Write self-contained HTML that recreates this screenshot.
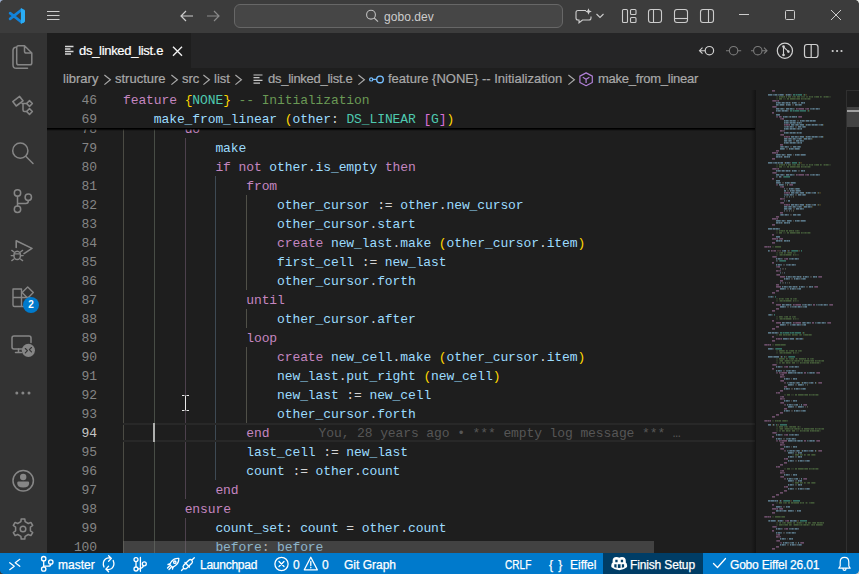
<!DOCTYPE html>
<html lang="en">
<head>
<meta charset="utf-8">
<title>ds_linked_list.e - gobo.dev - Visual Studio Code</title>
<style>
*{box-sizing:border-box;margin:0;padding:0}
html,body{width:859px;height:574px;overflow:hidden;background:#1e1e1e}
body{position:relative;font-family:"Liberation Sans",sans-serif;font-size:13px;color:#cccccc}
svg{position:absolute;left:0;top:0;overflow:visible}
.t{position:absolute;white-space:pre;line-height:16px}
#titlebar{position:absolute;left:0;top:0;width:859px;height:33px;background:#3c3c3c}
#search{position:absolute;left:234px;top:4px;width:329px;height:24px;border:1px solid #676767;border-radius:6px;background:#464646}
#activity{position:absolute;left:0;top:33px;width:47px;height:520px;background:#333333}
#badge{position:absolute;left:23px;top:264px;width:16px;height:16px;border-radius:8px;background:#007acc;color:#fff;font-size:10px;font-weight:bold;text-align:center;line-height:16px}
#tabs{position:absolute;left:47px;top:33px;width:812px;height:35px;background:#252526}
#tab{position:absolute;left:0;top:0;width:144px;height:35px;background:#1e1e1e}
#crumbs{position:absolute;left:47px;top:68px;width:812px;height:22px;background:#1e1e1e;color:#a9a9a9;font-size:13px}
#crumbs .t{top:3px;-webkit-text-stroke:0.2px #a9a9a9}
#editor{position:absolute;left:47px;top:90px;width:812px;height:463px;background:#1e1e1e;overflow:hidden}
.ln,.cl{position:absolute;height:19px;line-height:21px;font-family:"Liberation Mono",monospace;font-size:13px;letter-spacing:-0.1px;white-space:pre}
.ln{left:0;width:50px;text-align:right;color:#858585}
.ln.cur{color:#c6c6c6}
.cl{left:76px;color:#d4d4d4}
.k{color:#c586c0}.v{color:#9cdcfe}.y{color:#ffd700}.p{color:#da70d6}.c{color:#6a9955}.g{color:#565656;margin-left:3px}.ty{color:#4ec9b0}
.gd{position:absolute;width:1px}
#curline{position:absolute;left:76px;top:333px;width:632px;height:19px;border-top:2px solid #282828;border-bottom:2px solid #282828}
#cursor{position:absolute;left:106px;top:333px;width:2px;height:19px;background:#aeafad}
#sticky{position:absolute;left:0;top:0;width:708px;height:38px;background:#1e1e1e;box-shadow:0 1px 0 #000,0 2px 0 rgba(0,0,0,.55),0 3px 0 rgba(0,0,0,.2)}
#hscroll{position:absolute;left:76px;top:451px;width:531px;height:12px;background:rgba(121,121,121,.4)}
#vtrack{position:absolute;left:799px;top:0;width:13px;height:463px;border-left:1px solid #303030;border-top:1px solid #303030}
#vthumb{position:absolute;left:800px;top:17px;width:12px;height:20px;background:#424242}
#vmark{position:absolute;left:800px;top:20px;width:12px;height:2px;background:#a0a0a0}
#minimap{position:absolute;left:708px;top:0;width:91px;height:463px}
#mshadow{position:absolute;left:704px;top:0;width:5px;height:463px;background:linear-gradient(to right,rgba(0,0,0,0),rgba(0,0,0,.36))}
#status{position:absolute;left:0;top:553px;width:859px;height:21px;background:#007acc;color:#ffffff;font-size:12px}
#status .t{top:4px;-webkit-text-stroke:0.25px #fff}
#prom{position:absolute;left:603px;top:0;width:100px;height:21px;background:#003d66}
</style>
</head>
<body>
<div id="titlebar">
<div id="search"></div>
<svg width="859" height="33" viewBox="0 0 859 33" fill="none" stroke="#cccccc" stroke-width="1.1">
<!-- corner artefacts -->
<path d="M0 0H3Q0.5 0.5 0 3Z" fill="#9fb0d0" stroke="none"/>
<path d="M859 0H856Q858.5 0.5 859 3.5Z" fill="#e6e9e4" stroke="none"/>
<!-- vscode logo -->
<g stroke="none">
<path d="M10.1 13.1L21.3 22M10.1 18.9L21.3 10" stroke="#1283da" stroke-width="2.7" stroke-linecap="round"/>
<path d="M20.9 8.1L24.3 9.8Q25 10.2 25 11V21Q25 21.8 24.3 22.2L20.9 23.9Z" fill="#2aacf4"/>
</g>
<!-- hamburger -->
<path d="M47 11.5H59.5M47 15.5H59.5M47 19.5H59.5" stroke-width="1"/>
<!-- nav arrows -->
<path d="M193 16H181M186 11L181 16L186 21" stroke-width="1.2"/>
<path d="M207 16H219M214 11L219 16L214 21" stroke="#8a8a8a" stroke-width="1.2"/>
<!-- search icon -->
<circle cx="371" cy="14.7" r="4.4" stroke="#c0c0c0"/>
<path d="M374.2 18L378 21.6" stroke="#c0c0c0"/>
<!-- copilot chat icon -->
<path d="M586 10.5H578Q576 10.5 576 12.5V18Q576 20 578 20H579V22.8L582.5 20H589Q591 20 591 18V16.5"/>
<path d="M588.5 8.2L589.4 10.6L591.8 11.5L589.4 12.4L588.5 14.8L587.6 12.4L585.2 11.5L587.6 10.6Z" fill="#cccccc" stroke="none"/>
<path d="M596.5 14L600 17.5L603.5 14"/>
<!-- layout icons -->
<rect x="622.5" y="9.5" width="5" height="13" rx="1"/>
<rect x="630.5" y="9.5" width="5.5" height="5" rx="1"/>
<rect x="630.5" y="17.5" width="5.5" height="5" rx="1"/>
<rect x="648.5" y="9.5" width="13" height="13" rx="2.5"/>
<path d="M653.5 9.5V22.5"/>
<rect x="674.5" y="9.5" width="13" height="13" rx="2.5"/>
<path d="M674.5 18.5H687.5"/>
<rect x="700.5" y="9.5" width="13" height="13" rx="2.5"/>
<path d="M708.5 9.5V22.5"/>
<!-- window controls -->
<path d="M739 14.5H749" stroke-width="1"/>
<rect x="785.5" y="10.5" width="9" height="9" rx="1" stroke-width="1"/>
<path d="M831 10L841 20M841 10L831 20" stroke-width="1"/>
</svg>

<span class="t" style="left:384px;top:9px;font-size:12px;color:#cccccc;letter-spacing:0.05px">gobo.dev</span>
</div>
<div id="activity">
<svg width="47" height="520" viewBox="0 0 47 520" fill="none" stroke="#868686" stroke-width="1.5" stroke-linejoin="round" stroke-linecap="round">
<!-- explorer -->
<path d="M24.5 12.7H18.5Q16.7 12.7 16.7 14.5V30Q16.7 31.8 18.5 31.8H30Q31.8 31.8 31.8 30V20Z M24.5 12.7V18.2Q24.5 20 26.3 20H31.8"/>
<path d="M15.5 14.2Q13 14.5 13 17.5V32Q13 35.3 16.3 35.3H27.5"/>
<!-- second icon -->
<path d="M12.8 68.6L19.6 63.4L23 67.8L16.2 73Z" stroke-width="1.6"/>
<path d="M29.5 67.6L32.4 70.5L29.5 73.4L26.6 70.5Z"/>
<path d="M29.5 75.6L32.4 78.5L29.5 81.4L26.6 78.5Z"/>
<path d="M22 70.5H26.6M23 70.8V77Q23 78.5 24.5 78.5H26.6"/>
<!-- search -->
<circle cx="20.3" cy="117.7" r="7.6"/>
<path d="M26 123.5L33 130.5"/>
<!-- source control -->
<circle cx="17.5" cy="160" r="3.2"/>
<circle cx="28.3" cy="164.3" r="3.2"/>
<circle cx="17.5" cy="176.3" r="3.2"/>
<path d="M17.5 163.2V173.1M28.3 167.5V168Q28.3 170.5 25.8 170.5H17.5"/>
<!-- run and debug -->
<path d="M16.2 214.5V207.8L32 215.4L24 220.6" stroke-width="1.6"/>
<ellipse cx="17.2" cy="222.4" rx="3.3" ry="4.2" stroke-width="1.5"/>
<path d="M14 219L11.8 217.4M14 222.6H11.2M14 226L11.8 227.6M20.4 219L22.6 217.4M20.4 222.6H23.2M20.4 226L22.6 227.6M14.5 220.8H19.9" stroke-width="1.3"/>
<!-- extensions -->
<path d="M13 256H21.5V273.5H14.5Q13 273.5 13 272Z M13 264.5H30V272Q30 273.5 28.5 273.5H21.5" stroke-width="1.4"/>
<path d="M27.7 254L33.3 259.6L27.7 265.2L22.1 259.6Z" stroke-width="1.4"/>
<!-- remote explorer -->
<path d="M22 316H14Q12 316 12 314V305Q12 303 14 303H29Q31 303 31 305V309.5"/>
<path d="M15.5 319.5H21.5M18.5 316V319.5"/>
<circle cx="28.4" cy="317.3" r="6.6" fill="#868686" stroke="none"/>
<path d="M25.3 315.5L27.5 317.7L25.3 319.9M31.5 314.5L29.3 316.7L31.5 318.9" stroke="#333333" stroke-width="1.1"/>
<!-- more -->
<circle cx="16.8" cy="360" r="1.5" fill="#868686" stroke="none"/>
<circle cx="22.9" cy="360" r="1.5" fill="#868686" stroke="none"/>
<circle cx="29" cy="360" r="1.5" fill="#868686" stroke="none"/>
<!-- account -->
<circle cx="23.2" cy="447.8" r="10.2"/>
<circle cx="23.2" cy="444" r="3.2" fill="#868686" stroke="none"/>
<path d="M18.6 448.6H27.8Q29.2 448.6 29.2 450Q29.2 454.6 23.2 454.6Q17.2 454.6 17.2 450Q17.2 448.6 18.6 448.6Z" fill="#868686" stroke="none"/>
<!-- gear -->
<path d="M20.9 488.7L21.2 485.9L24.8 485.9L25.1 488.7L28.3 490.5L30.9 489.4L32.7 492.5L30.4 494.2L30.4 497.8L32.7 499.5L30.9 502.6L28.3 501.5L25.1 503.3L24.8 506.1L21.2 506.1L20.9 503.3L17.7 501.5L15.1 502.6L13.3 499.5L15.6 497.8L15.6 494.2L13.3 492.5L15.1 489.4L17.7 490.5Z" stroke-width="1.5"/>
<circle cx="23" cy="496" r="2.8"/>
</svg>
<div id="badge">2</div>
</div>
<div id="tabs">
<div id="tab"></div>
<svg width="812" height="35" viewBox="47 33 812 35" fill="none" stroke="#d0d0d0" stroke-width="1.1">
<!-- file icon -->
<path d="M65 46.5H73.5M65 49H70.5M65 51.5H73.5M65 54H71" stroke="#d8d8d8" stroke-width="1.4"/>
<!-- close -->
<path d="M173 46.8L182 55.8M182 46.8L173 55.8" stroke="#f0f0f0" stroke-width="1.4"/>
<!-- editor actions -->
<circle cx="709.4" cy="50.7" r="4.2" stroke-width="1.2"/>
<path d="M705 50.7H699.5M702.5 47.7L699.5 50.7L702.5 53.7" stroke-width="1.1"/>
<circle cx="733.6" cy="50.7" r="4.2" stroke="#7c7c7c"/>
<path d="M726 50.7H729.4M737.8 50.7H741.2" stroke="#7c7c7c"/>
<circle cx="757.8" cy="50.7" r="4.2" stroke="#7c7c7c"/>
<path d="M762 50.7H767M764 47.7L767 50.7L764 53.7M751 50.7H753.6" stroke="#7c7c7c"/>
<circle cx="784.9" cy="50.7" r="7.6" stroke-width="1.2"/>
<path d="M783.5 46.8V54.8M783.8 47.2L788.2 51.4" stroke-width="1.1"/>
<circle cx="783.5" cy="46.5" r="1.3" fill="#d0d0d0" stroke="none"/>
<circle cx="783.5" cy="55" r="1.3" fill="#d0d0d0" stroke="none"/>
<circle cx="788.4" cy="51.6" r="1.3" fill="#d0d0d0" stroke="none"/>
<rect x="804.5" y="44.5" width="13.5" height="13" rx="2.5" stroke-width="1.2"/>
<path d="M811.2 44.5V57.5" stroke-width="1.2"/>
<circle cx="832.7" cy="51" r="1.1" fill="#d0d0d0" stroke="none"/>
<circle cx="837.1" cy="51" r="1.1" fill="#d0d0d0" stroke="none"/>
<circle cx="841.5" cy="51" r="1.1" fill="#d0d0d0" stroke="none"/>
</svg>

<span class="t" style="left:32px;top:10px;color:#ffffff;letter-spacing:-0.3px;-webkit-text-stroke:0.2px #fff">ds_linked_list.e</span>
</div>
<div id="crumbs">
<svg width="812" height="22" viewBox="47 68 812 22" fill="none" stroke="#a9a9a9" stroke-width="1.1">
<path d="M104.4 75L110.4 79.8L104.4 84.6" stroke-width="1.2"/>
<path d="M171.4 75L177.4 79.8L171.4 84.6" stroke-width="1.2"/>
<path d="M203.4 75L209.4 79.8L203.4 84.6" stroke-width="1.2"/>
<path d="M235.4 75L241.4 79.8L235.4 84.6" stroke-width="1.2"/>
<path d="M358.4 75L364.4 79.8L358.4 84.6" stroke-width="1.2"/>
<path d="M568.4 75L574.4 79.8L568.4 84.6" stroke-width="1.2"/>
<!-- file icon -->
<path d="M253.5 75H262.5M253.5 77.7H259.5M253.5 80.4H262.5M253.5 83.1H260" stroke="#c5c5c5" stroke-width="1.2"/>
<!-- symbol: feature clause (blue) -->
<circle cx="380" cy="79.4" r="3.3" stroke="#75beff" stroke-width="1.4"/>
<circle cx="371.2" cy="79.4" r="1.6" stroke="#75beff" stroke-width="1.2"/>
<path d="M373 79.4H376.5" stroke="#75beff" stroke-width="1.3"/>
<!-- symbol: method (purple cube) -->
<path d="M586.1 72.9L592.3 76.1V82.5L586.1 85.7L579.9 82.5V76.1Z" stroke="#b180d7" stroke-width="1.2" stroke-linejoin="round"/>
<path d="M582.8 77.3L586.1 79.2L589.4 77.3M586.1 79.2V83" stroke="#b180d7" stroke-width="1.2"/>
</svg>

<span class="t" style="left:16px">library</span>
<span class="t" style="left:68px">structure</span>
<span class="t" style="left:135px">src</span>
<span class="t" style="left:167px">list</span>
<span class="t" style="left:221px;letter-spacing:-0.27px">ds_linked_list.e</span>
<span class="t" style="left:341px">feature {NONE} -- Initialization</span>
<span class="t" style="left:551px;letter-spacing:-0.25px">make_from_linear</span>
</div>
<div id="editor">
<div id="code">
<div class="gd" style="left:76px;top:29px;height:456px;background:#4b4b44"></div>
<div class="gd" style="left:107px;top:29px;height:456px;background:#484d46"></div>
<div class="gd" style="left:138px;top:48px;height:361px;background:#4d414d"></div>
<div class="gd" style="left:138px;top:428px;height:57px;background:#4d414d"></div>
<div class="gd" style="left:168px;top:86px;height:304px;background:#3e4a54"></div>
<div class="gd" style="left:199px;top:105px;height:95px;background:#505048"></div>
<div class="gd" style="left:199px;top:219px;height:19px;background:#505048"></div>
<div class="gd" style="left:199px;top:257px;height:76px;background:#505048"></div>
<div id="curline"></div>
<div class="ln" style="top:29px">78</div>
<div class="cl" style="top:29px">        <span class="k">do</span></div>
<div class="ln" style="top:48px">79</div>
<div class="cl" style="top:48px">            <span class="v">make</span></div>
<div class="ln" style="top:67px">80</div>
<div class="cl" style="top:67px">            <span class="k">if</span> <span class="k">not</span> <span class="v">other</span>.<span class="v">is_empty</span> <span class="k">then</span></div>
<div class="ln" style="top:86px">81</div>
<div class="cl" style="top:86px">                <span class="k">from</span></div>
<div class="ln" style="top:105px">82</div>
<div class="cl" style="top:105px">                    <span class="v">other_cursor</span> := <span class="v">other</span>.<span class="v">new_cursor</span></div>
<div class="ln" style="top:124px">83</div>
<div class="cl" style="top:124px">                    <span class="v">other_cursor</span>.<span class="v">start</span></div>
<div class="ln" style="top:143px">84</div>
<div class="cl" style="top:143px">                    <span class="k">create</span> <span class="v">new_last</span>.<span class="v">make</span> <span class="y">(</span><span class="v">other_cursor</span>.<span class="v">item</span><span class="y">)</span></div>
<div class="ln" style="top:162px">85</div>
<div class="cl" style="top:162px">                    <span class="v">first_cell</span> := <span class="v">new_last</span></div>
<div class="ln" style="top:181px">86</div>
<div class="cl" style="top:181px">                    <span class="v">other_cursor</span>.<span class="v">forth</span></div>
<div class="ln" style="top:200px">87</div>
<div class="cl" style="top:200px">                <span class="k">until</span></div>
<div class="ln" style="top:219px">88</div>
<div class="cl" style="top:219px">                    <span class="v">other_cursor</span>.<span class="v">after</span></div>
<div class="ln" style="top:238px">89</div>
<div class="cl" style="top:238px">                <span class="k">loop</span></div>
<div class="ln" style="top:257px">90</div>
<div class="cl" style="top:257px">                    <span class="k">create</span> <span class="v">new_cell</span>.<span class="v">make</span> <span class="y">(</span><span class="v">other_cursor</span>.<span class="v">item</span><span class="y">)</span></div>
<div class="ln" style="top:276px">91</div>
<div class="cl" style="top:276px">                    <span class="v">new_last</span>.<span class="v">put_right</span> <span class="y">(</span><span class="v">new_cell</span><span class="y">)</span></div>
<div class="ln" style="top:295px">92</div>
<div class="cl" style="top:295px">                    <span class="v">new_last</span> := <span class="v">new_cell</span></div>
<div class="ln" style="top:314px">93</div>
<div class="cl" style="top:314px">                    <span class="v">other_cursor</span>.<span class="v">forth</span></div>
<div class="ln cur" style="top:333px">94</div>
<div class="cl" style="top:333px">                <span class="k">end</span><span class="g">      You, 28 years ago • *** empty log message *** …</span></div>
<div class="ln" style="top:352px">95</div>
<div class="cl" style="top:352px">                <span class="v">last_cell</span> := <span class="v">new_last</span></div>
<div class="ln" style="top:371px">96</div>
<div class="cl" style="top:371px">                <span class="v">count</span> := <span class="v">other</span>.<span class="v">count</span></div>
<div class="ln" style="top:390px">97</div>
<div class="cl" style="top:390px">            <span class="k">end</span></div>
<div class="ln" style="top:409px">98</div>
<div class="cl" style="top:409px">        <span class="k">ensure</span></div>
<div class="ln" style="top:428px">99</div>
<div class="cl" style="top:428px">            <span class="v">count_set</span>: <span class="v">count</span> = <span class="v">other</span>.<span class="v">count</span></div>
<div class="ln" style="top:447px">100</div>
<div class="cl" style="top:447px">            <span class="v">before</span>: <span class="v">before</span></div>

<div id="cursor"></div>
</div>
<div id="sticky">
<div class="ln" style="top:0">46</div>
<div class="cl" style="top:0"><span class="k">feature</span> <span class="y">{</span><span class="ty">NONE</span><span class="y">}</span> <span class="c">-- Initialization</span></div>
<div class="ln" style="top:19px">69</div>
<div class="cl" style="top:19px">    <span class="v">make_from_linear</span> <span class="y">(</span><span class="v">other</span>: <span class="ty">DS_LINEAR</span> <span class="p">[</span><span class="ty">G</span><span class="p">]</span><span class="y">)</span></div>
</div>
<div id="minimap"><svg width="91" height="463" viewBox="0 0 91 463" fill="none" stroke-width="1.2">
<path d="M21 6.8h2M68 6.8h1M74 6.8h2M21 8.8h2M28 8.8h3M55 8.8h1M21 74.8h2M68 74.8h1M74 74.8h2M21 76.8h2M28 76.8h3M55 76.8h1M21 140.8h2M44 140.8h1M21 142.8h2M28 142.8h3M55 142.8h1M17 156.8h2M21 162.8h2M38 162.8h1M40 162.8h1M21 164.8h2M24 164.8h1M36 164.8h1M39 164.8h1M41 164.8h3M21 208.8h2M21 210.8h2M24 210.8h1M36 210.8h1M39 210.8h1M41 210.8h3M21 226.8h2M21 228.8h2M24 228.8h1M36 228.8h1M39 228.8h1M41 228.8h3M21 244.8h2M17 254.8h2M21 260.8h2M21 262.8h2M24 262.8h1M36 262.8h1M39 262.8h1M41 262.8h3M21 268.8h2M40 268.8h1M42 268.8h1M21 270.8h2M24 270.8h1M29 270.8h1M38 270.8h1M45 270.8h2M21 272.8h2M35 272.8h1M41 272.8h3M64 272.8h2M29 304.8h2M36 304.8h3M63 304.8h1M17 330.8h2M21 336.8h2M42 336.8h1M44 336.8h2M21 338.8h2M24 338.8h1M29 338.8h1M38 338.8h1M45 338.8h2M21 340.8h2M35 340.8h1M41 340.8h3M64 340.8h2M37 364.8h2M60 364.8h1M29 378.8h2M36 378.8h3M63 378.8h1M37 392.8h2M60 392.8h1M21 412.8h2M50 412.8h1M52 412.8h1M59 412.8h1M17 426.8h2M21 432.8h2M41 432.8h1M47 432.8h2M21 434.8h2M38 434.8h1M47 434.8h1M54 434.8h1" stroke="#6a9955" opacity="0.25"/>
<path d="M25 6.8h1M28 6.8h1M37 6.8h2M40 6.8h1M46 6.8h4M51 6.8h2M55 6.8h2M59 6.8h2M66 6.8h1M70 6.8h1M73 6.8h1M40 8.8h2M47 8.8h3M51 8.8h2M25 74.8h1M28 74.8h1M37 74.8h2M40 74.8h1M46 74.8h4M51 74.8h2M55 74.8h2M59 74.8h2M66 74.8h1M70 74.8h1M73 74.8h1M40 76.8h2M47 76.8h3M51 76.8h2M25 140.8h1M28 140.8h1M37 140.8h1M40 140.8h2M43 140.8h1M40 142.8h2M47 142.8h3M51 142.8h2M24 162.8h2M30 162.8h1M32 162.8h1M39 162.8h1M27 164.8h2M30 164.8h1M40 164.8h1M25 208.8h2M28 208.8h1M30 208.8h2M35 208.8h1M38 208.8h2M41 208.8h1M27 210.8h2M30 210.8h1M40 210.8h1M27 226.8h1M29 226.8h2M34 226.8h1M37 226.8h2M40 226.8h1M27 228.8h2M30 228.8h1M40 228.8h1M30 244.8h1M32 244.8h1M35 244.8h1M39 244.8h1M42 244.8h1M44 244.8h1M46 244.8h1M48 244.8h2M53 244.8h1M56 244.8h1M25 254.8h1M30 254.8h1M29 260.8h1M32 260.8h1M34 260.8h2M40 260.8h1M43 260.8h2M46 260.8h1M27 262.8h2M30 262.8h1M40 262.8h1M29 268.8h1M32 268.8h1M34 268.8h2M49 268.8h1M52 268.8h1M55 268.8h2M58 268.8h1M34 270.8h3M39 270.8h1M42 270.8h1M44 270.8h1M54 270.8h2M61 270.8h3M65 270.8h2M24 272.8h2M29 272.8h1M33 272.8h1M46 272.8h3M50 272.8h2M56 272.8h1M59 272.8h1M61 272.8h1M48 304.8h2M55 304.8h3M59 304.8h2M21 330.8h1M23 330.8h1M27 330.8h1M31 330.8h2M29 336.8h2M32 336.8h1M34 336.8h1M37 336.8h1M34 338.8h3M39 338.8h1M42 338.8h1M44 338.8h1M54 338.8h2M61 338.8h3M65 338.8h2M24 340.8h2M29 340.8h1M33 340.8h1M46 340.8h3M50 340.8h2M56 340.8h1M59 340.8h1M61 340.8h1M47 364.8h1M50 364.8h1M52 364.8h1M56 364.8h1M48 378.8h2M55 378.8h3M59 378.8h2M47 392.8h1M50 392.8h1M52 392.8h1M56 392.8h1M28 412.8h2M31 412.8h1M38 412.8h1M46 412.8h2M54 412.8h2M25 426.8h2M24 432.8h1M27 432.8h2M30 432.8h1M36 432.8h1M38 432.8h1M43 432.8h1M46 432.8h1M55 432.8h1M57 432.8h1M64 432.8h1M67 432.8h1M27 434.8h3M36 434.8h1M43 434.8h3M48 434.8h1M51 434.8h1M53 434.8h1M56 434.8h1M58 434.8h1M67 434.8h1" stroke="#6a9955" opacity="0.42"/>
<path d="M24 6.8h1M26 6.8h2M29 6.8h1M31 6.8h1M33 6.8h3M39 6.8h1M42 6.8h3M54 6.8h1M57 6.8h1M61 6.8h3M65 6.8h1M69 6.8h1M71 6.8h2M24 8.8h3M32 8.8h2M35 8.8h5M42 8.8h3M46 8.8h1M50 8.8h1M53 8.8h2M24 74.8h1M26 74.8h2M29 74.8h1M31 74.8h1M33 74.8h3M39 74.8h1M42 74.8h3M54 74.8h1M57 74.8h1M61 74.8h3M65 74.8h1M69 74.8h1M71 74.8h2M24 76.8h3M32 76.8h2M35 76.8h5M42 76.8h3M46 76.8h1M50 76.8h1M53 76.8h2M24 140.8h1M26 140.8h2M29 140.8h1M31 140.8h2M34 140.8h3M38 140.8h1M42 140.8h1M24 142.8h3M32 142.8h2M35 142.8h5M42 142.8h3M46 142.8h1M50 142.8h1M53 142.8h2M20 156.8h6M26 162.8h2M29 162.8h1M33 162.8h4M25 164.8h2M29 164.8h1M31 164.8h5M38 164.8h1M24 208.8h1M27 208.8h1M32 208.8h2M36 208.8h1M40 208.8h1M25 210.8h2M29 210.8h1M31 210.8h5M38 210.8h1M24 226.8h3M31 226.8h2M35 226.8h1M39 226.8h1M25 228.8h2M29 228.8h1M31 228.8h5M38 228.8h1M24 244.8h3M28 244.8h2M31 244.8h1M33 244.8h2M37 244.8h2M40 244.8h2M45 244.8h1M50 244.8h3M54 244.8h2M20 254.8h5M26 254.8h4M24 260.8h5M31 260.8h1M36 260.8h3M41 260.8h1M45 260.8h1M25 262.8h2M29 262.8h1M31 262.8h5M38 262.8h1M24 268.8h5M31 268.8h1M36 268.8h3M41 268.8h1M44 268.8h5M50 268.8h1M53 268.8h1M57 268.8h1M25 270.8h3M30 270.8h4M37 270.8h1M40 270.8h2M43 270.8h1M47 270.8h1M49 270.8h5M56 270.8h3M60 270.8h1M64 270.8h1M67 270.8h2M27 272.8h2M31 272.8h2M34 272.8h1M37 272.8h3M45 272.8h1M49 272.8h1M52 272.8h2M55 272.8h1M57 272.8h2M60 272.8h1M62 272.8h2M32 304.8h3M40 304.8h2M43 304.8h5M50 304.8h3M54 304.8h1M58 304.8h1M61 304.8h2M20 330.8h1M22 330.8h1M24 330.8h2M28 330.8h3M24 336.8h4M31 336.8h1M35 336.8h2M38 336.8h3M43 336.8h1M25 338.8h3M30 338.8h4M37 338.8h1M40 338.8h2M43 338.8h1M47 338.8h1M49 338.8h5M56 338.8h3M60 338.8h1M64 338.8h1M67 338.8h2M27 340.8h2M31 340.8h2M34 340.8h1M37 340.8h3M45 340.8h1M49 340.8h1M52 340.8h2M55 340.8h1M57 340.8h2M60 340.8h1M62 340.8h2M40 364.8h4M45 364.8h2M49 364.8h1M53 364.8h2M57 364.8h3M32 378.8h3M40 378.8h2M43 378.8h5M50 378.8h3M54 378.8h1M58 378.8h1M61 378.8h2M40 392.8h4M45 392.8h2M49 392.8h1M53 392.8h2M57 392.8h3M24 412.8h3M30 412.8h1M33 412.8h2M36 412.8h2M39 412.8h5M45 412.8h1M48 412.8h1M51 412.8h1M56 412.8h3M20 426.8h5M27 426.8h3M25 432.8h1M29 432.8h1M32 432.8h4M39 432.8h1M42 432.8h1M44 432.8h2M50 432.8h2M53 432.8h2M58 432.8h3M62 432.8h2M65 432.8h2M68 432.8h1M24 434.8h3M30 434.8h3M34 434.8h2M39 434.8h4M46 434.8h1M49 434.8h2M52 434.8h1M57 434.8h1M59 434.8h1M61 434.8h6" stroke="#6a9955" opacity="0.62"/>
<path d="M17 10.8h1M21 10.8h2M17 16.8h1M21 16.8h1M42 18.8h2M50 18.8h2M21 26.8h2M26 26.8h1M43 26.8h1M25 28.8h2M30 34.8h1M33 34.8h1M27 40.8h3M25 44.8h1M30 46.8h1M33 46.8h1M21 62.8h1M17 78.8h1M21 78.8h2M17 82.8h1M21 82.8h1M42 84.8h2M50 84.8h2M21 94.8h2M34 94.8h1M25 96.8h2M30 102.8h1M33 102.8h1M27 108.8h3M25 112.8h1M30 114.8h1M33 114.8h1M21 128.8h1M21 148.8h1M24 148.8h1M9 156.8h1M12 156.8h1M14 156.8h1M17 160.8h2M17 166.8h1M21 166.8h1M29 168.8h2M21 176.8h2M23 180.8h3M21 184.8h1M63 186.8h1M59 196.8h1M39 214.8h2M74 214.8h1M39 232.8h2M72 232.8h1M22 248.8h1M25 248.8h1M9 254.8h1M12 254.8h1M14 254.8h1M17 274.8h1M21 274.8h1M29 276.8h2M21 282.8h2M25 282.8h2M61 282.8h1M25 284.8h2M27 286.8h3M25 290.8h1M29 292.8h2M63 292.8h1M22 302.8h1M25 306.8h2M27 308.8h3M25 312.8h1M29 314.8h2M48 314.8h1M9 330.8h1M12 330.8h1M14 330.8h1M17 342.8h1M21 342.8h1M29 344.8h2M21 350.8h2M25 350.8h2M61 350.8h1M25 352.8h2M27 354.8h3M25 358.8h1M29 360.8h2M63 360.8h1M30 368.8h1M22 376.8h1M25 380.8h2M27 382.8h3M25 386.8h1M29 388.8h2M48 388.8h1M30 396.8h1M21 418.8h1M24 418.8h1M9 426.8h1M12 426.8h1M14 426.8h1M30 430.8h2M17 436.8h1M21 436.8h1M29 438.8h2M21 444.8h2M23 446.8h3M21 450.8h1M25 452.8h2M45 452.8h1" stroke="#c586c0" opacity="0.42"/>
<path d="M17 0.8h3M18 10.8h3M23 10.8h1M18 16.8h3M41 18.8h1M44 18.8h5M52 18.8h2M17 22.8h2M24 26.8h2M44 26.8h3M27 28.8h2M29 34.8h1M31 34.8h2M34 34.8h1M25 40.8h2M26 44.8h3M29 46.8h1M31 46.8h2M34 46.8h1M25 54.8h3M21 60.8h3M17 62.8h4M22 62.8h1M17 68.8h3M18 78.8h3M23 78.8h1M18 82.8h3M41 84.8h1M44 84.8h5M52 84.8h2M17 88.8h2M35 94.8h3M27 96.8h2M29 102.8h1M31 102.8h2M34 102.8h1M25 108.8h2M26 112.8h3M29 114.8h1M31 114.8h2M34 114.8h1M25 122.8h3M21 126.8h3M17 128.8h4M22 128.8h1M17 134.8h3M17 144.8h2M17 148.8h4M22 148.8h1M25 148.8h3M17 152.8h3M10 156.8h2M13 156.8h1M15 156.8h1M16 160.8h1M19 160.8h2M18 166.8h3M31 168.8h2M17 172.8h2M23 176.8h2M21 180.8h2M22 184.8h3M25 186.8h5M64 186.8h3M25 190.8h3M21 194.8h3M21 196.8h5M60 196.8h3M21 200.8h3M17 202.8h3M17 212.8h2M21 214.8h5M38 214.8h1M41 214.8h5M58 214.8h2M75 214.8h3M21 218.8h3M17 220.8h3M17 230.8h2M21 232.8h5M38 232.8h1M41 232.8h5M57 232.8h2M73 232.8h3M21 236.8h3M17 238.8h3M17 246.8h2M21 248.8h1M23 248.8h2M26 248.8h1M17 250.8h3M10 254.8h2M13 254.8h1M15 254.8h1M18 274.8h3M31 276.8h2M17 278.8h2M24 282.8h1M27 282.8h5M49 282.8h2M62 282.8h3M27 284.8h2M25 286.8h2M26 290.8h3M64 292.8h3M29 296.8h3M25 300.8h3M21 302.8h1M23 302.8h2M27 306.8h2M25 308.8h2M26 312.8h3M49 314.8h3M29 318.8h3M25 322.8h3M21 324.8h3M17 326.8h3M10 330.8h2M13 330.8h1M15 330.8h1M18 342.8h3M31 344.8h2M17 346.8h2M24 350.8h1M27 350.8h5M49 350.8h2M62 350.8h3M27 352.8h2M25 354.8h2M26 358.8h3M64 360.8h3M29 368.8h1M31 368.8h2M29 372.8h3M25 374.8h3M21 376.8h1M23 376.8h2M27 380.8h2M25 382.8h2M26 386.8h3M49 388.8h3M29 396.8h1M31 396.8h2M29 400.8h3M25 402.8h3M21 404.8h3M17 406.8h3M17 414.8h2M17 418.8h4M22 418.8h1M25 418.8h3M17 422.8h3M10 426.8h2M13 426.8h1M15 426.8h1M32 430.8h2M18 436.8h3M31 438.8h2M17 440.8h2M23 444.8h2M21 446.8h2M22 450.8h3M46 452.8h3M21 456.8h3M17 458.8h3" stroke="#c586c0" opacity="0.62"/>
<path d="M38 106.8h1M38 120.8h1M30 178.8h1M34 192.8h1M52 294.8h1M52 316.8h1" stroke="#b5cea8" opacity="0.42"/>
<path d="M32 94.8h1" stroke="#b5cea8" opacity="0.62"/>
<path d="M36 4.8h1M35 12.8h1M43 12.8h2M29 14.8h1M37 14.8h2M29 18.8h1M39 18.8h1M33 20.8h1M33 26.8h1M42 30.8h2M50 30.8h1M41 32.8h1M44 34.8h1M63 34.8h1M40 36.8h2M41 38.8h1M41 42.8h1M44 46.8h1M63 46.8h1M37 48.8h1M38 50.8h2M41 52.8h1M35 56.8h2M31 58.8h2M39 58.8h1M30 64.8h1M38 64.8h1M45 64.8h1M27 66.8h1M35 72.8h1M35 80.8h1M43 80.8h2M29 84.8h1M39 84.8h1M22 86.8h1M26 86.8h1M27 92.8h2M35 92.8h1M30 94.8h1M31 98.8h2M39 98.8h1M32 100.8h2M40 100.8h1M44 102.8h1M56 102.8h1M40 104.8h2M31 106.8h2M36 106.8h1M31 110.8h1M44 114.8h1M56 114.8h1M37 116.8h1M38 118.8h2M31 120.8h2M36 120.8h1M35 124.8h2M30 130.8h1M38 130.8h1M45 130.8h1M27 132.8h1M27 150.8h1M25 160.8h1M34 160.8h1M44 160.8h1M27 168.8h1M22 170.8h1M28 174.8h2M27 178.8h2M27 182.8h1M46 186.8h1M55 186.8h2M36 188.8h2M45 188.8h1M27 192.8h2M32 192.8h1M42 196.8h1M51 196.8h2M32 198.8h2M41 198.8h1M18 206.8h1M36 214.8h1M32 216.8h2M47 216.8h1M17 224.8h1M36 232.8h1M32 234.8h2M46 234.8h1M23 242.8h1M34 248.8h1M18 258.8h1M27 266.8h1M31 266.8h1M27 276.8h1M28 280.8h2M36 288.8h1M40 292.8h1M53 292.8h1M58 292.8h1M40 294.8h2M50 294.8h1M36 298.8h2M45 298.8h1M36 310.8h1M38 314.8h1M44 314.8h1M40 316.8h2M50 316.8h1M36 320.8h2M45 320.8h1M19 334.8h1M23 334.8h1M27 344.8h1M28 348.8h2M36 356.8h1M40 360.8h1M53 360.8h1M58 360.8h1M40 362.8h2M40 366.8h2M40 370.8h2M49 370.8h1M36 384.8h1M38 388.8h1M44 388.8h1M40 390.8h2M40 394.8h2M40 398.8h2M49 398.8h1M26 410.8h1M36 410.8h1M28 416.8h2M31 420.8h1M40 420.8h1M28 430.8h1M43 430.8h1M27 438.8h1M28 442.8h2M32 448.8h1M34 452.8h1M40 452.8h2M32 454.8h2M41 454.8h1" stroke="#d4d4d4" opacity="0.25"/>
<path d="M22 160.8h3" stroke="#ce9178" opacity="0.25"/>
<path d="M40 4.8h1M37 20.8h1M44 20.8h1M27 242.8h1M34 242.8h1M39 242.8h1" stroke="#4ec9b0" opacity="0.25"/>
<path d="M42 4.8h1M39 20.8h1M28 86.8h1M36 160.8h1M24 170.8h1M29 242.8h1M36 242.8h1M20 258.8h1M33 266.8h1M28 410.8h1" stroke="#4ec9b0" opacity="0.42"/>
<path d="M38 4.8h2M41 4.8h1M43 4.8h4M49 4.8h1M35 20.8h2M38 20.8h1M40 20.8h4M45 20.8h6M53 20.8h1M37 72.8h5M44 72.8h1M29 86.8h6M37 160.8h6M46 160.8h1M25 170.8h6M20 206.8h1M19 224.8h1M25 242.8h2M28 242.8h1M30 242.8h4M35 242.8h1M37 242.8h2M40 242.8h6M48 242.8h1M21 258.8h6M29 266.8h1M34 266.8h6M21 334.8h1M25 334.8h7M29 410.8h6M38 410.8h7M45 430.8h7" stroke="#4ec9b0" opacity="0.62"/>
<path d="M17 4.8h1M22 4.8h1M26 12.8h1M30 12.8h1M24 14.8h1M24 18.8h1M34 18.8h1M60 18.8h1M26 20.8h1M36 26.8h1M34 30.8h1M54 30.8h1M34 32.8h1M39 34.8h1M56 34.8h1M34 36.8h1M46 36.8h1M34 38.8h1M34 42.8h1M39 46.8h1M56 46.8h1M32 48.8h1M41 48.8h1M52 48.8h1M32 50.8h1M44 50.8h1M34 52.8h1M29 56.8h1M41 56.8h1M26 64.8h1M17 72.8h1M22 72.8h1M26 80.8h1M30 80.8h1M24 84.8h1M34 84.8h1M60 84.8h1M39 102.8h1M34 104.8h1M46 104.8h1M39 114.8h1M32 116.8h1M41 116.8h1M52 116.8h1M32 118.8h1M44 118.8h1M29 124.8h1M41 124.8h1M26 130.8h1M17 138.8h1M22 168.8h1M39 168.8h1M22 174.8h1M36 174.8h1M32 186.8h1M37 186.8h1M41 186.8h1M49 186.8h1M30 188.8h1M40 188.8h1M28 196.8h1M33 196.8h1M37 196.8h1M45 196.8h1M36 198.8h1M30 214.8h1M52 214.8h1M62 214.8h1M68 214.8h1M36 216.8h1M42 216.8h1M30 232.8h1M51 232.8h1M61 232.8h1M66 232.8h1M36 234.8h1M41 234.8h1M16 242.8h1M22 276.8h1M39 276.8h1M22 280.8h1M36 280.8h1M41 282.8h1M53 282.8h1M30 288.8h1M33 292.8h1M48 292.8h1M30 298.8h1M40 298.8h1M30 310.8h1M33 314.8h1M30 320.8h1M40 320.8h1M22 344.8h1M39 344.8h1M22 348.8h1M36 348.8h1M41 350.8h1M53 350.8h1M30 356.8h1M33 360.8h1M48 360.8h1M34 366.8h1M34 370.8h1M44 370.8h1M30 384.8h1M33 388.8h1M34 394.8h1M34 398.8h1M44 398.8h1M15 430.8h1M22 438.8h1M39 438.8h1M22 442.8h1M36 442.8h1M26 448.8h1M29 452.8h1M26 454.8h1M36 454.8h1" stroke="#9cdcfe" opacity="0.25"/>
<path d="M18 4.8h2M23 4.8h2M28 4.8h1M32 4.8h1M35 4.8h1M22 12.8h1M25 12.8h1M29 12.8h1M33 12.8h1M38 12.8h1M41 12.8h1M48 12.8h1M23 14.8h1M32 14.8h1M35 14.8h1M42 14.8h2M46 14.8h1M25 18.8h1M28 18.8h1M37 18.8h2M55 18.8h3M59 18.8h1M63 18.8h2M22 20.8h1M25 20.8h1M29 20.8h1M32 20.8h1M29 26.8h1M32 26.8h1M34 26.8h1M40 26.8h1M30 30.8h1M33 30.8h1M37 30.8h1M40 30.8h1M46 30.8h1M49 30.8h1M57 30.8h1M60 30.8h1M30 32.8h1M33 32.8h1M37 32.8h1M40 32.8h1M43 32.8h1M45 32.8h2M40 34.8h1M43 34.8h1M52 34.8h1M55 34.8h1M59 34.8h1M62 34.8h1M64 34.8h2M29 36.8h3M33 36.8h1M37 36.8h2M47 36.8h1M50 36.8h1M30 38.8h1M33 38.8h1M37 38.8h1M40 38.8h1M42 38.8h1M44 38.8h2M30 42.8h1M33 42.8h1M37 42.8h1M40 42.8h1M43 42.8h2M46 42.8h1M42 46.8h2M52 46.8h1M55 46.8h1M59 46.8h1M62 46.8h1M64 46.8h2M33 48.8h1M36 48.8h1M40 48.8h1M42 48.8h2M46 48.8h1M55 48.8h2M33 50.8h1M36 50.8h1M47 50.8h2M30 52.8h1M33 52.8h1M37 52.8h1M40 52.8h1M42 52.8h1M44 52.8h2M25 56.8h1M28 56.8h1M32 56.8h2M42 56.8h1M45 56.8h1M29 58.8h1M35 58.8h1M38 58.8h1M44 58.8h1M25 64.8h1M29 64.8h1M36 64.8h1M41 64.8h1M44 64.8h1M50 64.8h1M23 66.8h1M25 66.8h1M31 66.8h1M33 66.8h1M18 72.8h2M24 72.8h2M31 72.8h1M34 72.8h1M22 80.8h1M25 80.8h1M29 80.8h1M33 80.8h1M38 80.8h1M41 80.8h1M48 80.8h1M25 84.8h1M28 84.8h1M37 84.8h2M55 84.8h3M59 84.8h1M63 84.8h2M21 86.8h1M25 92.8h1M31 92.8h1M34 92.8h1M40 92.8h1M28 94.8h1M29 98.8h1M35 98.8h1M38 98.8h1M40 98.8h1M44 98.8h1M36 100.8h1M39 100.8h1M45 100.8h1M40 102.8h1M43 102.8h1M52 102.8h1M55 102.8h1M57 102.8h2M63 102.8h1M29 104.8h3M33 104.8h1M37 104.8h2M47 104.8h1M50 104.8h1M29 106.8h1M34 106.8h1M29 110.8h1M42 114.8h2M52 114.8h1M55 114.8h1M57 114.8h2M63 114.8h1M33 116.8h1M36 116.8h1M40 116.8h1M42 116.8h2M46 116.8h1M55 116.8h2M33 118.8h1M36 118.8h1M47 118.8h2M29 120.8h1M34 120.8h1M25 124.8h1M28 124.8h1M32 124.8h2M42 124.8h1M45 124.8h1M25 130.8h1M29 130.8h1M36 130.8h1M41 130.8h1M44 130.8h1M50 130.8h1M23 132.8h1M25 132.8h1M31 132.8h1M33 132.8h1M20 138.8h1M23 138.8h2M23 150.8h1M25 150.8h1M31 150.8h1M33 150.8h1M14 160.8h1M27 160.8h2M33 160.8h1M25 168.8h2M34 168.8h3M38 168.8h1M42 168.8h2M21 170.8h1M25 174.8h2M31 174.8h3M35 174.8h1M39 174.8h2M25 178.8h1M25 182.8h1M29 182.8h1M35 186.8h2M40 186.8h1M44 186.8h1M52 186.8h2M60 186.8h1M33 188.8h2M43 188.8h2M46 188.8h2M50 188.8h1M25 192.8h1M30 192.8h1M31 196.8h2M36 196.8h1M40 196.8h1M48 196.8h2M56 196.8h1M29 198.8h2M39 198.8h2M42 198.8h2M13 206.8h3M17 206.8h1M29 214.8h1M34 214.8h1M47 214.8h3M51 214.8h1M55 214.8h2M61 214.8h1M63 214.8h3M67 214.8h1M71 214.8h2M29 216.8h2M35 216.8h1M37 216.8h3M41 216.8h1M45 216.8h2M48 216.8h2M13 224.8h1M16 224.8h1M29 232.8h1M34 232.8h1M47 232.8h1M50 232.8h1M54 232.8h2M60 232.8h1M62 232.8h1M65 232.8h1M69 232.8h2M29 234.8h2M35 234.8h1M37 234.8h1M40 234.8h1M44 234.8h2M47 234.8h2M19 242.8h1M22 242.8h1M32 248.8h2M43 248.8h2M47 248.8h1M17 258.8h1M17 266.8h2M25 276.8h2M34 276.8h3M38 276.8h1M42 276.8h2M25 280.8h2M31 280.8h3M35 280.8h1M39 280.8h2M37 282.8h3M42 282.8h1M45 282.8h1M47 282.8h1M52 282.8h1M54 282.8h1M57 282.8h1M59 282.8h1M33 288.8h2M40 288.8h1M32 292.8h1M34 292.8h1M37 292.8h1M39 292.8h1M41 292.8h1M44 292.8h1M51 292.8h2M54 292.8h2M37 294.8h2M47 294.8h2M33 298.8h2M43 298.8h2M46 298.8h2M50 298.8h1M33 310.8h2M40 310.8h1M36 314.8h2M39 314.8h2M37 316.8h2M47 316.8h2M33 320.8h2M43 320.8h2M46 320.8h2M50 320.8h1M25 344.8h2M34 344.8h3M38 344.8h1M42 344.8h2M25 348.8h2M31 348.8h3M35 348.8h1M39 348.8h2M37 350.8h3M42 350.8h1M45 350.8h1M47 350.8h1M52 350.8h1M54 350.8h1M57 350.8h1M59 350.8h1M33 356.8h2M40 356.8h1M32 360.8h1M34 360.8h1M37 360.8h1M39 360.8h1M41 360.8h1M44 360.8h1M51 360.8h2M54 360.8h2M37 362.8h2M44 362.8h1M37 366.8h2M45 366.8h1M37 370.8h2M47 370.8h2M50 370.8h2M54 370.8h1M33 384.8h2M40 384.8h1M36 388.8h2M39 388.8h2M37 390.8h2M44 390.8h1M37 394.8h2M45 394.8h1M37 398.8h2M47 398.8h2M50 398.8h2M54 398.8h1M15 410.8h1M19 410.8h1M21 410.8h1M25 416.8h2M32 416.8h1M23 420.8h2M26 420.8h3M37 420.8h2M43 420.8h1M13 430.8h1M20 430.8h1M24 430.8h1M27 430.8h1M37 430.8h2M41 430.8h1M25 438.8h2M34 438.8h3M38 438.8h1M42 438.8h2M25 442.8h2M31 442.8h3M35 442.8h1M39 442.8h2M29 448.8h2M36 448.8h1M32 452.8h2M35 452.8h2M29 454.8h2M39 454.8h2M42 454.8h2M46 454.8h1" stroke="#9cdcfe" opacity="0.42"/>
<path d="M13 4.8h4M20 4.8h2M25 4.8h3M31 4.8h1M33 4.8h2M21 12.8h1M23 12.8h2M27 12.8h2M31 12.8h2M34 12.8h1M37 12.8h1M39 12.8h2M46 12.8h2M49 12.8h1M21 14.8h2M25 14.8h4M31 14.8h1M33 14.8h2M40 14.8h2M44 14.8h2M21 18.8h3M26 18.8h2M31 18.8h3M35 18.8h2M58 18.8h1M61 18.8h2M21 20.8h1M23 20.8h2M27 20.8h2M30 20.8h2M21 24.8h4M28 26.8h1M30 26.8h2M35 26.8h1M37 26.8h3M41 26.8h1M29 30.8h1M31 30.8h2M35 30.8h2M38 30.8h2M45 30.8h1M47 30.8h2M51 30.8h3M55 30.8h2M58 30.8h2M29 32.8h1M31 32.8h2M35 32.8h2M38 32.8h2M42 32.8h1M44 32.8h1M36 34.8h3M41 34.8h2M45 34.8h4M51 34.8h1M53 34.8h2M57 34.8h2M60 34.8h2M66 34.8h2M32 36.8h1M35 36.8h2M43 36.8h3M48 36.8h2M29 38.8h1M31 38.8h2M35 38.8h2M38 38.8h2M43 38.8h1M46 38.8h1M29 42.8h1M31 42.8h2M35 42.8h2M38 42.8h2M42 42.8h1M45 42.8h1M36 46.8h3M40 46.8h2M45 46.8h4M51 46.8h1M53 46.8h2M57 46.8h2M60 46.8h2M66 46.8h2M29 48.8h3M34 48.8h2M38 48.8h2M44 48.8h2M49 48.8h3M53 48.8h2M29 50.8h3M34 50.8h2M41 50.8h3M45 50.8h2M29 52.8h1M31 52.8h2M35 52.8h2M38 52.8h2M43 52.8h1M46 52.8h1M26 56.8h2M30 56.8h2M38 56.8h3M43 56.8h2M25 58.8h4M34 58.8h1M36 58.8h2M40 58.8h4M21 64.8h4M27 64.8h2M32 64.8h4M40 64.8h1M42 64.8h2M46 64.8h4M21 66.8h2M24 66.8h1M26 66.8h1M29 66.8h2M32 66.8h1M34 66.8h1M13 72.8h4M20 72.8h2M23 72.8h1M26 72.8h2M30 72.8h1M32 72.8h2M21 80.8h1M23 80.8h2M27 80.8h2M31 80.8h2M34 80.8h1M37 80.8h1M39 80.8h2M46 80.8h2M49 80.8h1M21 84.8h3M26 84.8h2M31 84.8h3M35 84.8h2M58 84.8h1M61 84.8h2M24 86.8h2M21 90.8h4M21 92.8h4M30 92.8h1M32 92.8h2M36 92.8h4M24 94.8h4M34 98.8h1M36 98.8h2M41 98.8h3M29 100.8h2M35 100.8h1M37 100.8h2M41 100.8h4M36 102.8h3M41 102.8h2M45 102.8h4M51 102.8h1M53 102.8h2M59 102.8h2M32 104.8h1M35 104.8h2M43 104.8h3M48 104.8h2M33 110.8h2M36 114.8h3M40 114.8h2M45 114.8h4M51 114.8h1M53 114.8h2M59 114.8h2M29 116.8h3M34 116.8h2M38 116.8h2M44 116.8h2M49 116.8h3M53 116.8h2M29 118.8h3M34 118.8h2M41 118.8h3M45 118.8h2M26 124.8h2M30 124.8h2M38 124.8h3M43 124.8h2M21 130.8h4M27 130.8h2M32 130.8h4M40 130.8h1M42 130.8h2M46 130.8h4M21 132.8h2M24 132.8h1M26 132.8h1M29 132.8h2M32 132.8h1M34 132.8h1M13 138.8h4M18 138.8h2M21 138.8h2M21 146.8h4M21 150.8h2M24 150.8h1M26 150.8h1M29 150.8h2M32 150.8h1M34 150.8h1M13 160.8h1M29 160.8h2M21 168.8h1M23 168.8h2M37 168.8h1M40 168.8h2M21 174.8h1M23 174.8h2M34 174.8h1M37 174.8h2M31 186.8h1M33 186.8h2M38 186.8h2M42 186.8h2M45 186.8h1M48 186.8h1M50 186.8h2M58 186.8h2M61 186.8h1M29 188.8h1M31 188.8h2M39 188.8h1M41 188.8h2M48 188.8h2M27 196.8h1M29 196.8h2M34 196.8h2M38 196.8h2M41 196.8h1M44 196.8h1M46 196.8h2M54 196.8h2M57 196.8h1M25 198.8h4M35 198.8h1M37 198.8h2M44 198.8h2M16 206.8h1M27 214.8h2M31 214.8h3M35 214.8h1M50 214.8h1M53 214.8h2M66 214.8h1M69 214.8h2M25 216.8h4M40 216.8h1M43 216.8h2M50 216.8h2M14 224.8h2M27 232.8h2M31 232.8h3M35 232.8h1M48 232.8h2M52 232.8h2M63 232.8h2M67 232.8h2M25 234.8h4M38 234.8h2M42 234.8h2M49 234.8h2M13 242.8h3M17 242.8h2M20 242.8h2M28 248.8h4M35 248.8h4M41 248.8h2M45 248.8h2M13 258.8h4M13 266.8h4M19 266.8h5M26 266.8h1M21 276.8h1M23 276.8h2M37 276.8h1M40 276.8h2M21 280.8h1M23 280.8h2M34 280.8h1M37 280.8h2M33 282.8h4M40 282.8h1M43 282.8h2M46 282.8h1M55 282.8h2M58 282.8h1M29 288.8h1M31 288.8h2M38 288.8h2M41 288.8h1M35 292.8h2M38 292.8h1M42 292.8h2M47 292.8h1M49 292.8h2M56 292.8h2M60 292.8h1M33 294.8h4M43 294.8h4M29 298.8h1M31 298.8h2M39 298.8h1M41 298.8h2M48 298.8h2M29 310.8h1M31 310.8h2M38 310.8h2M41 310.8h1M32 314.8h1M34 314.8h2M41 314.8h2M46 314.8h1M33 316.8h4M43 316.8h4M29 320.8h1M31 320.8h2M39 320.8h1M41 320.8h2M48 320.8h2M13 334.8h3M18 334.8h1M21 344.8h1M23 344.8h2M37 344.8h1M40 344.8h2M21 348.8h1M23 348.8h2M34 348.8h1M37 348.8h2M33 350.8h4M40 350.8h1M43 350.8h2M46 350.8h1M55 350.8h2M58 350.8h1M29 356.8h1M31 356.8h2M38 356.8h2M41 356.8h1M35 360.8h2M38 360.8h1M42 360.8h2M47 360.8h1M49 360.8h2M56 360.8h2M60 360.8h1M33 362.8h4M43 362.8h1M45 362.8h2M33 366.8h1M35 366.8h2M43 366.8h2M46 366.8h1M33 370.8h1M35 370.8h2M43 370.8h1M45 370.8h2M52 370.8h2M29 384.8h1M31 384.8h2M38 384.8h2M41 384.8h1M32 388.8h1M34 388.8h2M41 388.8h2M46 388.8h1M33 390.8h4M43 390.8h1M45 390.8h2M33 394.8h1M35 394.8h2M43 394.8h2M46 394.8h1M33 398.8h1M35 398.8h2M43 398.8h1M45 398.8h2M52 398.8h2M13 410.8h2M16 410.8h3M20 410.8h1M22 410.8h1M25 410.8h1M21 416.8h4M31 416.8h1M33 416.8h2M21 420.8h2M25 420.8h1M29 420.8h2M33 420.8h4M42 420.8h1M44 420.8h2M14 430.8h1M16 430.8h4M23 430.8h1M25 430.8h2M35 430.8h2M39 430.8h2M21 438.8h1M23 438.8h2M37 438.8h1M40 438.8h2M21 442.8h1M23 442.8h2M34 442.8h1M37 442.8h2M25 448.8h1M27 448.8h2M34 448.8h2M37 448.8h1M28 452.8h1M30 452.8h2M37 452.8h2M43 452.8h1M25 454.8h1M27 454.8h2M35 454.8h1M37 454.8h2M44 454.8h2" stroke="#9cdcfe" opacity="0.62"/>
<path d="M30 4.8h1M48 4.8h1M50 4.8h1M51 4.8h1M52 20.8h1M54 20.8h1M50 34.8h1M68 34.8h1M50 46.8h1M68 46.8h1M48 48.8h1M57 48.8h1M29 72.8h1M43 72.8h1M45 72.8h1M46 72.8h1M50 102.8h1M62 102.8h1M64 102.8h1M65 102.8h1M50 114.8h1M62 114.8h1M64 114.8h1M65 114.8h1M48 116.8h1M57 116.8h1M32 160.8h1M43 160.8h1M47 242.8h1M49 242.8h1M40 248.8h1M48 248.8h1M25 266.8h1M30 266.8h1M46 292.8h1M61 292.8h1M17 334.8h1M22 334.8h1M46 360.8h1M61 360.8h1M24 410.8h1M35 410.8h1M22 430.8h1M42 430.8h1" stroke="#d8b830" opacity="0.25"/>
</svg></div>
<div id="mshadow"></div>
<div id="hscroll"></div>
<div id="vtrack"></div>
<div id="vthumb"></div>
<div id="vmark"></div>
<svg width="812" height="463" viewBox="47 90 812 463" fill="none" stroke="#ffffff" stroke-width="1">
<path d="M185.5 395.5V410.5M182 395.5H184.5M186.5 395.5H189M182 410.5H184.5M186.5 410.5H189" stroke="#e8e8e8"/>
</svg>

</div>
<div id="status">
<div id="prom"></div>
<svg width="859" height="21" viewBox="0 553 859 21" fill="none" stroke="#ffffff" stroke-width="1.3" stroke-linecap="round" stroke-linejoin="round">
<path d="M0 574V570.5Q0.5 573.5 3.5 574Z" fill="#3a3a3a" stroke="none"/><path d="M859 574V570.5Q858.5 573.5 855.5 574Z" fill="#d8cfc4" stroke="none"/>
<!-- remote -->
<path d="M9.7 562.7L14.3 566.2L9.7 569.7M19.8 559.3L15.2 562.8L19.8 566.3" stroke-width="1.2"/>
<!-- branch -->
<circle cx="43.7" cy="558.7" r="2.2"/><circle cx="43.7" cy="569" r="2.2"/><circle cx="50.8" cy="562" r="2.2"/>
<path d="M43.7 561V566.8M50.8 564.2Q50.8 566.2 48.3 566.2H44"/>
<!-- sync -->
<path d="M104 567Q102 562 105.5 559Q108.3 557.3 111.2 558.4M108.6 555.8L111.4 558.4L108.6 561.2"/>
<path d="M113.2 560.5Q115.2 565.5 111.7 568.5Q108.9 570.2 106 569.1M108.6 571.7L105.8 569.1L108.6 566.3"/>
<!-- git graph -->
<circle cx="136" cy="559.6" r="2"/><circle cx="136" cy="569" r="2"/><circle cx="144.3" cy="563.8" r="2"/>
<path d="M136 561.6V567M140.4 557.5V571.3M143.5 565.8Q142.5 568.6 138 569"/>
<!-- rocket -->
<g transform="translate(0 1)"><path d="M178.8 557.3Q174 557 171.5 560.5L169.5 563.5L172.5 566.5L175.5 564.5Q179 562 178.8 557.3Z"/>
<circle cx="174.8" cy="561.2" r="1.2"/>
<path d="M169.5 565L167.5 567M171 566.5L169 568.5M170 563L168 563.5M173 566L172.5 568"/></g>
<!-- plug -->
<path d="M186.5 562.5L188.8 560.2Q190.3 558.8 191.8 560.2Q193.2 561.7 191.8 563.2L189.5 565.5M185.5 563.5L183.7 565.3Q182.3 566.8 183.7 568.2Q185.2 569.6 186.7 568.2L188.5 566.4M192 560L194.3 557.7M183.5 568.5L181.5 570.5M185 562.5L189.5 567"/>
<!-- error -->
<circle cx="281.5" cy="564" r="6.6"/>
<path d="M279 561.5L284 566.5M284 561.5L279 566.5"/>
<!-- warning -->
<path d="M310.8 557.3L317.3 569.8H304.3Z"/>
<path d="M310.8 561.5V565.5M310.8 567.3V567.8"/>
<!-- copilot -->
<path d="M612.3 565.3Q612.3 563.6 613.6 562.7V561Q613.6 558 616.4 558Q619.2 558 619.2 560.4Q619.2 558 622 558Q624.8 558 624.8 561V562.7Q626.1 563.6 626.1 565.3V566.6Q623.2 569.2 619.2 569.2Q615.2 569.2 612.3 566.6Z" stroke-width="2" fill="#ffffff"/>
<path d="M615.3 559.8H617.6V562.2H615.3ZM620.8 559.8H623.1V562.2H620.8ZM614.3 564.3H624.1V567.2Q619.2 568.6 614.3 567.2Z" fill="#003d66" stroke="none"/>
<path d="M617.2 564.3V567.6M621.2 564.3V567.6" stroke-width="1.3"/>
<!-- check -->
<path d="M713.5 563.5L717.5 567.5L725.5 558.5" stroke-width="1.3"/>
<!-- bell -->
<path d="M838.8 568.2H850.2L848.8 566V562Q848.8 557.4 844.5 557.4Q840.2 557.4 840.2 562V566ZM843 568.8Q843 570.4 844.5 570.4Q846 570.4 846 568.8" stroke-width="1.2"/>
</svg>

<span class="t" style="left:58px">master</span>
<span class="t" style="left:200px;letter-spacing:-0.25px">Launchpad</span>
<span class="t" style="left:293px">0</span>
<span class="t" style="left:322px">0</span>
<span class="t" style="left:344px">Git Graph</span>
<span class="t" style="left:505px;transform:scaleX(0.84);transform-origin:0 0">CRLF</span>
<span class="t" style="left:549px;letter-spacing:1px">{ }</span>
<span class="t" style="left:570px">Eiffel</span>
<span class="t" style="left:630px;letter-spacing:-0.15px">Finish Setup</span>
<span class="t" style="left:730px;letter-spacing:-0.2px">Gobo Eiffel 26.01</span>
</div>
</body>
</html>
